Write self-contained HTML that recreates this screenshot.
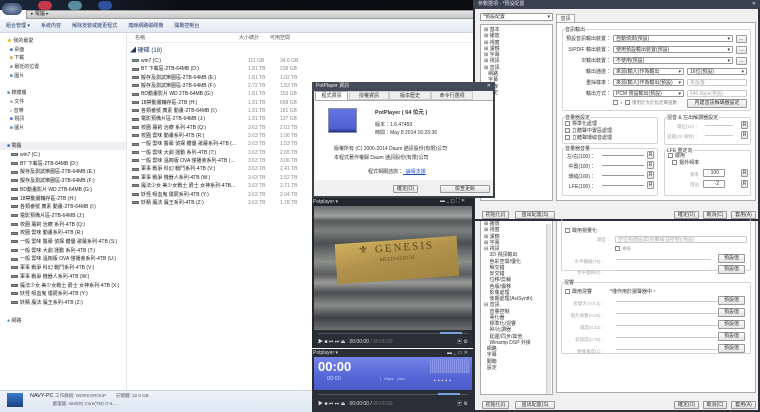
<!DOCTYPE html>
<html><head><meta charset="utf-8"><style>
*{margin:0;padding:0;box-sizing:border-box}
body{width:760px;height:412px;overflow:hidden;background:#1a1f26;font-family:"Liberation Sans","Noto Sans CJK TC",sans-serif;font-size:5.5px;color:#333;position:relative}
.a{position:absolute;white-space:nowrap}
.btn{position:absolute;border:1px solid #9a9a9a;background:linear-gradient(#fafafa,#e4e4e4);border-radius:1px;font-size:5px;text-align:center;line-height:7px;color:#333}
.cb{position:absolute;border:1px solid #999;background:#fff;border-radius:1px;font-size:5px;line-height:6px;padding-left:2px;color:#333}
.chk{display:inline-block;width:5px;height:5px;border:1px solid #888;background:#fff;vertical-align:middle;margin-right:2px}
.grp{position:absolute;border:1px solid #d5d5d5;border-radius:2px}
.sl{position:absolute;height:1px;background:#999}
.dr{display:inline-block;width:7px;height:3px;background:#888;border:1px solid #666;margin-right:2px;vertical-align:middle}
</style></head><body>

<!-- Explorer -->
<div class="a" style="left:0;top:0;width:474px;height:412px;background:#fff"></div>
<div class="a" style="left:0;top:0;width:474px;height:10px;background:linear-gradient(90deg,#1c2a3e,#0b0e12 40%,#0a0c10)"></div>
<div class="a" style="left:2px;top:3px;width:20px;height:12px;border-radius:6px;background:radial-gradient(#8fa0c0,#2c3e60)"></div>
<div class="a" style="left:38px;top:1px;width:14px;height:9px;border-radius:5px;background:#c4384a"></div>
<div class="a" style="left:68px;top:1px;width:14px;height:9px;border-radius:5px;background:#5a8ca0"></div>
<div class="a" style="left:98px;top:1px;width:14px;height:9px;border-radius:5px;background:#3050a0"></div>
<div class="a" style="left:26px;top:10px;width:448px;height:9px;background:linear-gradient(#e5e5e5,#c8c8c8);border:1px solid #999;font-size:5px;line-height:7px;padding-left:4px">▸ 電腦 ▸</div>
<div class="a" style="left:0;top:19px;width:474px;height:14px;background:linear-gradient(#f4f7fb,#e3eaf3);border-bottom:1px solid #cdd6e2;font-size:5px;line-height:14px;padding-left:6px;color:#1e3966">組合管理 ▾&nbsp;&nbsp;&nbsp;&nbsp;&nbsp;&nbsp;&nbsp;&nbsp;系統內容&nbsp;&nbsp;&nbsp;&nbsp;&nbsp;&nbsp;&nbsp;&nbsp;解除安裝或變更程式&nbsp;&nbsp;&nbsp;&nbsp;&nbsp;&nbsp;&nbsp;&nbsp;連線網路磁碟機&nbsp;&nbsp;&nbsp;&nbsp;&nbsp;&nbsp;&nbsp;&nbsp;開啟控制台</div>
<div class="a" style="left:126px;top:33px;width:1px;height:357px;background:#e6e6e6"></div>
<div class="a" style="left:127px;top:33px;width:347px;height:10px;border-bottom:1px solid #eee;font-size:5px;line-height:10px;color:#555"><span style="position:absolute;left:8px">名稱</span><span style="position:absolute;left:112px">大小總計</span><span style="position:absolute;left:143px">可用空間</span></div>
<div class="a" style="left:130px;top:45px;font-size:6px;color:#1e3966">◢ 硬碟 (18)</div>
<div class="a" style="left:132px;top:57px;line-height:8.35px;font-size:5px;color:#222">
<div><span class="dr" style="background:#6a8"></span>win7 (C:)</div><div><span class="dr"></span>BT 下載區-2TB-64MB (D:)</div><div><span class="dr"></span>擬存及測試樂園區-2TB-64MB (E:)</div><div><span class="dr"></span>擬存及測試樂園區-3TB-64MB (F:)</div><div><span class="dr"></span>BD動畫影片 WD 2TB-64MB (G:)</div><div><span class="dr"></span>18禁動畫輔存區-2TB (H:)</div><div><span class="dr"></span>各類番號 廣素 動畫-2TB-64MB (I:)</div><div><span class="dr"></span>電影預備片區-2TB-64MB (J:)</div><div><span class="dr"></span>校園 蘿莉 治療 系列-4TB (Q:)</div><div><span class="dr"></span>校園 雲味 動畫系列-4TB (R:)</div><div><span class="dr"></span>一般 雲味 醫藥 偵探 體優 歌蘿系列-4TB (...</div><div><span class="dr"></span>一般 雲味 大劇 運動 系列-4TB (T:)</div><div><span class="dr"></span>一般 雲味 溫婉版 OVA 僅播會系列-4TB (...</div><div><span class="dr"></span>軍事 戰爭 科幻 戰鬥系列-4TB (V:)</div><div><span class="dr"></span>軍事 戰爭 機器人系列-4TB (W:)</div><div><span class="dr"></span>魔法少女 美少女戰士 爵士 女神系列-4TB...</div><div><span class="dr"></span>妖怪 吸血鬼 僵屍系列-4TB (Y:)</div><div><span class="dr"></span>妖精 魔法 魔王系列-4TB (Z:)</div></div>
<div class="a" style="left:248px;top:57px;line-height:8.35px;font-size:5px;color:#888;text-align:right;width:16px">111 GB<br>1.81 TB<br>1.81 TB<br>2.72 TB<br>1.81 TB<br>1.81 TB<br>1.81 TB<br>1.81 TB<br>3.63 TB<br>3.63 TB<br>3.63 TB<br>3.63 TB<br>3.63 TB<br>3.63 TB<br>3.63 TB<br>3.63 TB<br>3.63 TB<br>3.63 TB</div>
<div class="a" style="left:280px;top:57px;line-height:8.35px;font-size:5px;color:#888;text-align:right;width:16px">34.6 GB<br>238 GB<br>1.02 TB<br>1.83 TB<br>153 GB<br>668 GB<br>181 GB<br>137 GB<br>2.03 TB<br>1.06 TB<br>1.53 TB<br>2.65 TB<br>3.06 TB<br>2.41 TB<br>1.52 TB<br>2.71 TB<br>2.04 TB<br>1.78 TB</div>
<div class="a" style="left:7px;top:37px;line-height:8.7px;font-size:5px;color:#333">
<div><span style="color:#e8b000">★</span> 我的最愛</div><div>&nbsp;&nbsp;<span style="color:#36c">■</span> 桌面</div><div>&nbsp;&nbsp;<span style="color:#c93">■</span> 下載</div><div>&nbsp;&nbsp;<span style="color:#889">■</span> 最近的位置</div><div>&nbsp;&nbsp;<span style="color:#58a">■</span> 圖片</div><div>&nbsp;</div><div><span style="color:#58a">■</span> 媒體櫃</div><div>&nbsp;&nbsp;<span style="color:#aaa">■</span> 文件</div><div>&nbsp;&nbsp;<span style="color:#36c">♪</span> 音樂</div><div>&nbsp;&nbsp;<span style="color:#36c">■</span> 視訊</div><div>&nbsp;&nbsp;<span style="color:#58a">■</span> 圖片</div><div>&nbsp;</div></div>
<div class="a" style="left:0;top:142px;width:126px;height:8px;background:#eef0f3"></div>
<div class="a" style="left:7px;top:142px;line-height:8.7px;font-size:5px;color:#333"><div><span style="color:#36c">■</span> 電腦</div></div>
<div class="a" style="left:11px;top:151px;line-height:8.7px;font-size:5px;color:#222">
<div><span class="dr" style="background:#6a8"></span>win7 (C:)</div><div><span class="dr"></span>BT 下載區-2TB-64MB (D:)</div><div><span class="dr"></span>擬存及測試樂園區-2TB-64MB (E:)</div><div><span class="dr"></span>擬存及測試樂園區-3TB-64MB (F:)</div><div><span class="dr"></span>BD動畫影片 WD 2TB-64MB (G:)</div><div><span class="dr"></span>18禁動畫輔存區-2TB (H:)</div><div><span class="dr"></span>各類番號 廣素 動畫-2TB-64MB (I:)</div><div><span class="dr"></span>電影預備片區-2TB-64MB (J:)</div><div><span class="dr"></span>校園 蘿莉 治療 系列-4TB (Q:)</div><div><span class="dr"></span>校園 雲味 動畫系列-4TB (R:)</div><div><span class="dr"></span>一般 雲味 醫藥 偵探 體優 歌蘿系列-4TB (S:)</div><div><span class="dr"></span>一般 雲味 大劇 運動 系列-4TB (T:)</div><div><span class="dr"></span>一般 雲味 溫婉版 OVA 僅播會系列-4TB (U:)</div><div><span class="dr"></span>軍事 戰爭 科幻 戰鬥系列-4TB (V:)</div><div><span class="dr"></span>軍事 戰爭 機器人系列-4TB (W:)</div><div><span class="dr"></span>魔法少女 美少女戰士 爵士 女神系列-4TB (X:)</div><div><span class="dr"></span>妖怪 吸血鬼 僵屍系列-4TB (Y:)</div><div><span class="dr"></span>妖精 魔法 魔王系列-4TB (Z:)</div></div>
<div class="a" style="left:7px;top:317px;font-size:5px;color:#333"><span style="color:#3a7ac0">●</span> 網路</div>
<div class="a" style="left:0;top:390px;width:474px;height:22px;background:linear-gradient(#eef3f9,#dde7f2);border-top:1px solid #c8d3e0"></div>
<div class="a" style="left:7px;top:393px;width:16px;height:14px;background:linear-gradient(#3b7bd0,#1c3f80)"></div>
<div class="a" style="left:30px;top:392px;font-size:5.5px;color:#223;line-height:7px">NAVY-PC <span style="font-size:4.5px;color:#556">工作群組: WORKGROUP&nbsp;&nbsp;&nbsp;&nbsp;&nbsp;&nbsp;&nbsp;&nbsp;記憶體: 32.0 GB</span><br><span style="font-size:4.5px;color:#556">&nbsp;&nbsp;&nbsp;&nbsp;&nbsp;&nbsp;&nbsp;&nbsp;&nbsp;&nbsp;&nbsp;&nbsp;&nbsp;&nbsp;&nbsp;&nbsp;&nbsp;&nbsp;處理器: Intel(R) Core(TM) i7-4...</span></div>

<!-- Pref top window -->
<div class="a" style="left:473px;top:0;width:287px;height:221px;background:#f0f0f0;border:2px solid #2a2f38;border-top:none"></div>
<div class="a" style="left:473px;top:0;width:287px;height:9px;background:#3a4250;color:#dde;font-size:5px;line-height:8px;padding-left:5px">參數選項 - *預設配置<span style="position:absolute;right:4px">✕</span></div>
<div class="cb" style="left:480px;top:13px;width:73px;height:8px">*預設配置<span style="position:absolute;right:2px">▾</span></div>
<div class="a" style="left:480px;top:24px;width:73px;height:177px;background:#fff;border:1px solid #aaa;font-size:5px;line-height:6.3px;padding:2px 0 0 3px;color:#333">⊞ 基本<br>⊞ 播放<br>⊞ 視窗<br>⊞ 濾鏡<br>⊞ 字幕<br>⊞ 視訊<br>⊞ 音訊<br>&nbsp;&nbsp;&nbsp;網路<br>&nbsp;&nbsp;&nbsp;字幕<br>&nbsp;&nbsp;&nbsp;關聯<br>&nbsp;&nbsp;&nbsp;設定</div>
<div class="a" style="left:556px;top:14px;width:19px;height:9px;background:#fff;border:1px solid #aaa;border-bottom:none;font-size:5px;text-align:center;line-height:8px">音訊</div>
<div class="a" style="left:556px;top:22px;width:200px;height:179px;background:#fff;border:1px solid #aaa"></div>
<div class="grp" style="left:562px;top:29px;width:189px;height:82px"></div>
<div class="a" style="left:565px;top:26px;font-size:5px;background:#fff">音訊輸出</div>
<div class="a" style="left:556px;top:34px;width:55px;font-size:5px;line-height:11px;text-align:right">預設音訊輸出裝置：<br>S/PDIF 輸出裝置：<br>次輸出裝置：<br>輸出通道：<br>重採樣率：<br>輸出方式：</div>
<div class="cb" style="left:613px;top:35px;width:120px;height:7px">自動偵測(預設)<span style="position:absolute;right:2px">▾</span></div>
<div class="cb" style="left:613px;top:46px;width:120px;height:7px">使用預設輸出裝置(預設)<span style="position:absolute;right:2px">▾</span></div>
<div class="cb" style="left:613px;top:57px;width:120px;height:7px">不使用(預設)<span style="position:absolute;right:2px">▾</span></div>
<div class="btn" style="left:736px;top:35px;width:11px;height:8px">...</div>
<div class="btn" style="left:736px;top:46px;width:11px;height:8px">...</div>
<div class="btn" style="left:736px;top:57px;width:11px;height:8px">...</div>
<div class="cb" style="left:613px;top:68px;width:71px;height:7px">來源(輸入)作為輸出<span style="position:absolute;right:2px">▾</span></div>
<div class="cb" style="left:613px;top:79px;width:71px;height:7px">來源(輸入)作為輸出(預設)<span style="position:absolute;right:2px">▾</span></div>
<div class="cb" style="left:613px;top:90px;width:71px;height:7px">PCM 預設輸出(預設)<span style="position:absolute;right:2px">▾</span></div>
<div class="cb" style="left:687px;top:68px;width:60px;height:7px">16位(預設)<span style="position:absolute;right:2px">▾</span></div>
<div class="cb" style="left:687px;top:79px;width:60px;height:7px;color:#aaa;border-color:#ccc">未設置</div>
<div class="cb" style="left:687px;top:90px;width:60px;height:7px;color:#aaa;border-color:#ccc">640 kbps(預設)</div>
<div class="a" style="left:613px;top:100px;font-size:4.5px;color:#888"><span class="chk"></span>1&nbsp;&nbsp;<span class="chk"></span>僅用於大於指定聲道數</div>
<div class="btn" style="left:687px;top:99px;width:60px;height:9px">內建音訊解碼器設定</div>
<div class="grp" style="left:562px;top:117px;width:96px;height:27px"></div>
<div class="a" style="left:565px;top:114px;font-size:5px;background:#fff">音量器設定</div>
<div class="a" style="left:565px;top:121px;font-size:5px;line-height:7px"><span class="chk"></span>標準化處理<br><span class="chk"></span>立體聲中置區處理<br><span class="chk"></span>立體聲環繞音處理</div>
<div class="grp" style="left:562px;top:148px;width:96px;height:48px"></div>
<div class="a" style="left:565px;top:145px;font-size:5px;background:#fff">音量器音量</div>
<div class="a" style="left:565px;top:152px;font-size:5px;line-height:10px;width:30px;text-align:right">左/右(100)：<br>中置(100)：<br>環繞(100)：<br>LFE(100)：</div>
<div class="sl" style="left:602px;top:155px;width:42px"></div><div class="sl" style="left:602px;top:165px;width:42px"></div><div class="sl" style="left:602px;top:175px;width:42px"></div><div class="sl" style="left:602px;top:185px;width:42px"></div>
<div class="btn" style="left:647px;top:151px;width:7px;height:8px">R</div><div class="btn" style="left:647px;top:161px;width:7px;height:8px">R</div><div class="btn" style="left:647px;top:171px;width:7px;height:8px">R</div><div class="btn" style="left:647px;top:181px;width:7px;height:8px">R</div>
<div class="grp" style="left:664px;top:117px;width:87px;height:28px"></div>
<div class="a" style="left:667px;top:114px;font-size:5px;background:#fff">混音 &amp; 左出解調器設定</div>
<div class="a" style="left:667px;top:122px;font-size:4.5px;line-height:10px;color:#aaa">&nbsp;&nbsp;&nbsp;&nbsp;&nbsp;&nbsp;&nbsp;&nbsp;電位(10)：<br>延遲(20 毫秒)：</div>
<div class="sl" style="left:705px;top:125px;width:28px;background:#ccc"></div><div class="sl" style="left:705px;top:135px;width:28px;background:#ccc"></div>
<div class="btn" style="left:741px;top:121px;width:7px;height:8px">R</div><div class="btn" style="left:741px;top:131px;width:7px;height:8px">R</div>
<div class="grp" style="left:664px;top:150px;width:87px;height:46px"></div>
<div class="a" style="left:667px;top:147px;font-size:5px;background:#fff">LFE 重定向</div>
<div class="a" style="left:668px;top:153px;font-size:5px;line-height:7px"><span class="chk"></span>啟用<br>&nbsp;&nbsp;&nbsp;<span class="chk"></span>揚外頻率</div>
<div class="a" style="left:690px;top:170px;font-size:4.5px;line-height:10px;color:#aaa">頻率：<br>增益：</div>
<div class="cb" style="left:703px;top:169px;width:22px;height:8px;text-align:right;padding-right:5px">100</div>
<div class="cb" style="left:703px;top:180px;width:22px;height:8px;text-align:right;padding-right:5px">-2</div>
<div class="btn" style="left:741px;top:169px;width:7px;height:8px">R</div><div class="btn" style="left:741px;top:180px;width:7px;height:8px">R</div>
<div class="btn" style="left:482px;top:211px;width:27px;height:8px">初始化(I)</div>
<div class="btn" style="left:515px;top:211px;width:40px;height:8px">匯出配置(S)</div>
<div class="btn" style="left:674px;top:211px;width:25px;height:8px">確定(O)</div>
<div class="btn" style="left:703px;top:211px;width:24px;height:8px">取消(C)</div>
<div class="btn" style="left:731px;top:211px;width:25px;height:8px">套用(A)</div>

<!-- Pref lower window -->
<div class="a" style="left:473px;top:221px;width:287px;height:191px;background:#f0f0f0;border:2px solid #2a2f38;border-top:none"></div>
<div class="a" style="left:480px;top:221px;width:73px;height:174px;background:#fff;border:1px solid #aaa;border-top:none;font-size:5px;line-height:6.25px;padding:0 0 0 3px;color:#333">⊞ 播放<br>⊞ 視窗<br>⊞ 濾鏡<br>⊞ 字幕<br>⊟ 視訊<br>&nbsp;&nbsp;&nbsp;&nbsp;3D 視訊輸出<br>&nbsp;&nbsp;&nbsp;&nbsp;色彩空間/優化<br>&nbsp;&nbsp;&nbsp;&nbsp;解交錯<br>&nbsp;&nbsp;&nbsp;&nbsp;反交錯<br>&nbsp;&nbsp;&nbsp;&nbsp;位移/剪裁<br>&nbsp;&nbsp;&nbsp;&nbsp;色版/偏移<br>&nbsp;&nbsp;&nbsp;&nbsp;影像處理<br>&nbsp;&nbsp;&nbsp;&nbsp;後期處理(AviSynth)<br>⊟ 音訊<br>&nbsp;&nbsp;&nbsp;&nbsp;音量控制<br>&nbsp;&nbsp;&nbsp;&nbsp;等化器<br>&nbsp;&nbsp;&nbsp;&nbsp;標準化/混響<br>&nbsp;&nbsp;&nbsp;&nbsp;昇/比調器<br>&nbsp;&nbsp;&nbsp;&nbsp;延遲/同步/其他<br>&nbsp;&nbsp;&nbsp;&nbsp;Winamp DSP 外掛<br>&nbsp;&nbsp;網路<br>&nbsp;&nbsp;字幕<br>&nbsp;&nbsp;關聯<br>&nbsp;&nbsp;設定</div>
<div class="a" style="left:546px;top:224px;width:5px;height:170px;background:#e8e8e8;border-left:1px solid #ccc"></div>
<div class="a" style="left:556px;top:221px;width:200px;height:172px;background:#fff;border:1px solid #aaa;border-top:none"></div>
<div class="grp" style="left:561px;top:219px;width:190px;height:52px;border-top:none"></div>
<div class="a" style="left:565px;top:227px;font-size:5px"><span class="chk"></span>啟用視覺化</div>
<div class="a" style="left:597px;top:237px;font-size:4.5px;color:#aaa">類型：</div>
<div class="cb" style="left:615px;top:236px;width:132px;height:7px;color:#aaa;border-color:#ccc">空位頻譜區屏(依數據溢控制)(預設)</div>
<div class="a" style="left:615px;top:246px;font-size:4.5px;color:#aaa"><span class="chk"></span>專線</div>
<div class="a" style="left:565px;top:256px;font-size:4.5px;line-height:11px;color:#aaa;width:40px;text-align:right">水平擴展(75)：<br>水平偏移(0)：</div>
<div class="sl" style="left:616px;top:259px;width:95px;background:#ccc"></div><div class="sl" style="left:616px;top:270px;width:95px;background:#ccc"></div>
<div class="btn" style="left:718px;top:254px;width:27px;height:9px">預設值</div><div class="btn" style="left:718px;top:265px;width:27px;height:9px">預設值</div>
<div class="grp" style="left:561px;top:282px;width:190px;height:72px"></div>
<div class="a" style="left:564px;top:279px;font-size:5px;background:#fff">混響</div>
<div class="a" style="left:565px;top:288px;font-size:5px"><span class="chk"></span>啟用混響&nbsp;&nbsp;&nbsp;&nbsp;&nbsp;&nbsp;&nbsp;&nbsp;&nbsp;&nbsp;&nbsp;&nbsp;&nbsp;*僅作用於揚聲器中。</div>
<div class="a" style="left:565px;top:298px;font-size:4.5px;line-height:12px;color:#aaa;width:40px;text-align:right">房間大小(0.5)：<br>阻尼係數(0.25)：<br>濕度(0.33)：<br>乾燥度(0.75)：<br>頻寬寬度(1)：</div>
<div class="sl" style="left:616px;top:301px;width:128px;background:#ccc"></div><div class="sl" style="left:616px;top:313px;width:128px;background:#ccc"></div><div class="sl" style="left:616px;top:325px;width:128px;background:#ccc"></div><div class="sl" style="left:616px;top:337px;width:128px;background:#ccc"></div><div class="sl" style="left:616px;top:349px;width:128px;background:#ccc"></div>
<div class="btn" style="left:718px;top:296px;width:27px;height:9px">預設值</div><div class="btn" style="left:718px;top:308px;width:27px;height:9px">預設值</div><div class="btn" style="left:718px;top:320px;width:27px;height:9px">預設值</div><div class="btn" style="left:718px;top:332px;width:27px;height:9px">預設值</div><div class="btn" style="left:718px;top:344px;width:27px;height:9px">預設值</div>
<div class="btn" style="left:482px;top:401px;width:27px;height:8px">初始化(I)</div>
<div class="btn" style="left:515px;top:401px;width:40px;height:8px">匯出配置(S)</div>
<div class="btn" style="left:674px;top:401px;width:25px;height:8px">確定(O)</div>
<div class="btn" style="left:703px;top:401px;width:24px;height:8px">取消(C)</div>
<div class="btn" style="left:731px;top:401px;width:25px;height:8px">套用(A)</div>

<!-- PotPlayer info dialog -->
<div class="a" style="left:312px;top:82px;width:183px;height:116px;background:#f0f0f0;border:2px solid #3a3f48"></div>
<div class="a" style="left:312px;top:82px;width:183px;height:9px;background:#444b56;color:#eee;font-size:5px;line-height:8px;padding-left:4px">PotPlayer 資訊<span style="position:absolute;right:4px">✕</span></div>
<div class="a" style="left:314px;top:91px;width:179px;height:9px;font-size:5px;line-height:9px;color:#333">
<span class="a" style="left:1px;width:33px;height:9px;background:#fff;border:1px solid #aaa;border-bottom:none;text-align:center">程式資訊</span><span class="a" style="left:35px;width:40px;height:9px;border:1px solid #ccc;text-align:center;background:#eee">授權資訊</span><span class="a" style="left:75px;width:42px;height:9px;border:1px solid #ccc;text-align:center;background:#eee">版本歷史</span><span class="a" style="left:117px;width:42px;height:9px;border:1px solid #ccc;text-align:center;background:#eee">命令行選項</span></div>
<div class="a" style="left:315px;top:100px;width:178px;height:80px;background:#fff;border-top:1px solid #aaa"></div>
<div class="a" style="left:328px;top:108px;width:29px;height:25px;background:linear-gradient(#6275e0,#5060d0 85%,#203080);border:1px solid #8890b0"></div>
<div class="a" style="left:375px;top:108px;font-size:5.5px;font-weight:bold">PotPlayer ( 64 位元 )</div>
<div class="a" style="left:375px;top:121px;font-size:5px;line-height:8px">版本：1.6.47450<br>時間：May  8 2014 16:23:36</div>
<div class="a" style="left:334px;top:145px;font-size:5px;line-height:9px">版權所有 (C) 2006-2014 Daum 通訊股份(有限)公司<br>本程式著作權歸 Daum 通訊股份(有限)公司</div>
<div class="a" style="left:368px;top:168px;font-size:5px">程式相關諮詢：<span style="color:#2050c0;text-decoration:underline">&nbsp;&nbsp;論壇支援</span></div>
<div class="btn" style="left:393px;top:185px;width:25px;height:8px">確定(O)</div>
<div class="btn" style="left:440px;top:185px;width:50px;height:8px">檢查更新</div>

<!-- Video player -->
<div class="a" style="left:312px;top:198px;width:162px;height:150px;background:#22262d"></div>
<div class="a" style="left:313px;top:199px;font-size:5px;color:#ddd">Potplayer ▾</div>
<div class="a" style="left:440px;top:198px;font-size:5px;color:#ccc">▬ _ ◻ ⛶ ✕</div>
<div class="a" style="left:314px;top:206px;width:158px;height:124px;background:linear-gradient(180deg,#6a6d6e 0%,#a0a2a0 8%,#555859 12%,#7d7f7e 20%,#4d5052 30%,#8d8f8c 45%,#5a5c5d 55%,#9a9b98 62%,#4a4c4e 70%,#8a8c8a 80%,#3e4042 90%,#6e7070)"></div>
<div class="a" style="left:336px;top:240px;width:122px;height:40px;background:linear-gradient(170deg,#cfb060,#b0904a 50%,#a08540);transform:rotate(-4deg);color:#5a4818;font-size:11px;font-family:'Liberation Serif',serif;text-align:center;line-height:17px;letter-spacing:2px">⚜ GENESIS<div style="font-size:5px;line-height:6px;letter-spacing:0">MULTI-STITCH</div></div>
<div class="a" style="left:314px;top:330px;width:158px;height:17px;background:#2a2e36"></div>
<div class="a" style="left:318px;top:333px;width:150px;height:1px;background:#555"></div>
<div class="a" style="left:440px;top:332px;width:22px;height:2px;background:#7aa0e0"></div>
<div class="a" style="left:318px;top:338px;font-size:5px;color:#ddd">▶ ■ ⏮ ⏭ ⏏&nbsp;&nbsp;&nbsp;00:00:00 <span style="color:#777">/ 00:00:00</span></div>
<div class="a" style="left:457px;top:338px;font-size:5px;color:#ddd">▣ ⚙</div>

<!-- Mini player -->
<div class="a" style="left:312px;top:349px;width:162px;height:63px;background:#2a2e36"></div>
<div class="a" style="left:313px;top:350px;font-size:5px;color:#ddd">Potplayer ▾</div>
<div class="a" style="left:447px;top:350px;font-size:5px;color:#ccc">▬ _ ▭ ✕</div>
<div class="a" style="left:314px;top:357px;width:158px;height:33px;background:linear-gradient(#7483e6,#5566d6 60%,#4a5ac8)"></div>
<div class="a" style="left:318px;top:359px;font-size:13px;font-weight:bold;color:#fff">00:00</div>
<div class="a" style="left:327px;top:376px;font-size:5.5px;color:#cdd4ff">00:00</div>
<div class="a" style="left:380px;top:376px;font-size:4px;color:#cdd4ff">|&nbsp;&nbsp;&nbsp;Kbps&nbsp;&nbsp;&nbsp;|&nbsp;khz</div>
<div class="a" style="left:430px;top:359px;width:40px;height:14px;background:repeating-linear-gradient(90deg,#8a96ec 0 1px,#6d7ce0 1px 2px)"></div>
<div class="a" style="left:434px;top:378px;font-size:5px;color:#fff;letter-spacing:2px">▪▪▪▪▪</div>
<div class="a" style="left:318px;top:394px;width:150px;height:1px;background:#555"></div>
<div class="a" style="left:438px;top:393px;width:22px;height:2px;background:#7aa0e0"></div>
<div class="a" style="left:318px;top:400px;font-size:5px;color:#ddd">▶ ■ ⏮ ⏭ ⏏&nbsp;&nbsp;&nbsp;00:00:00 / <span style="color:#777">00:00:00</span></div>
<div class="a" style="left:457px;top:400px;font-size:5px;color:#ddd">▣ ⚙</div>
</body></html>
